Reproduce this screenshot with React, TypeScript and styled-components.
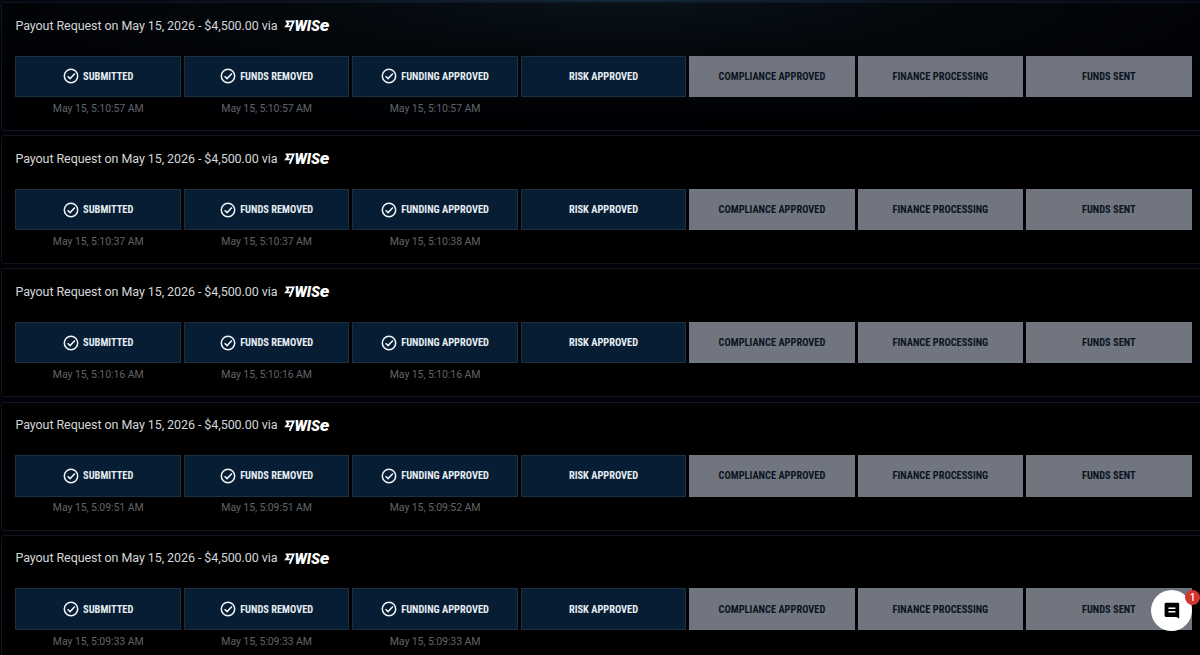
import styled, { createGlobalStyle } from 'styled-components';

type StepState = 'done' | 'current' | 'pending';

const steps: { label: string; state: StepState }[] = [
  { label: 'Submitted', state: 'done' },
  { label: 'Funds Removed', state: 'done' },
  { label: 'Funding Approved', state: 'done' },
  { label: 'Risk Approved', state: 'current' },
  { label: 'Compliance Approved', state: 'pending' },
  { label: 'Finance Processing', state: 'pending' },
  { label: 'Funds Sent', state: 'pending' },
];

const payouts = [
  { id: 1, times: ['5:10:57', '5:10:57', '5:10:57'] },
  { id: 2, times: ['5:10:37', '5:10:37', '5:10:38'] },
  { id: 3, times: ['5:10:16', '5:10:16', '5:10:16'] },
  { id: 4, times: ['5:09:51', '5:09:51', '5:09:52'] },
  { id: 5, times: ['5:09:33', '5:09:33', '5:09:33'] },
];

const WiseLogo = () => (
  <S.Logo viewBox="0 0 46 14" role="img" aria-label="Wise">
    <path
      d="M1.2 2.4H11L6.8 12.8H4.7L8.2 4.2H4.4L5.4 5.7L3.7 7.5H6.5L5.8 9.2H0.1L3 5.8Z"
      fill="#fff"
    />
    <text
      x="10.4"
      y="12.8"
      fill="#fff"
      fontFamily="Roboto, sans-serif"
      fontStyle="italic"
      fontWeight="900"
      fontSize="13.8"
      textLength="35"
      lengthAdjust="spacingAndGlyphs"
    >
      WIS<tspan fontSize="17">e</tspan>
    </text>
  </S.Logo>
);

const CheckIcon = () => (
  <S.Check viewBox="0 0 16 16">
    <circle cx="8" cy="8" r="6.7" />
    <path d="M4.6 8.2L7.1 10.6L11.9 5.5" />
  </S.Check>
);

const App = () => {
  return (
    <>
      <GlobalStyle />
      <S.Page>
        {payouts.map((payout) => (
          <S.Card key={payout.id}>
            <S.CardTitle>
              <span>Payout Request on May 15, 2026 - $4,500.00 via</span>
              <WiseLogo />
            </S.CardTitle>
            <S.Steps>
              {steps.map((step, i) => (
                <S.Step key={step.label}>
                  <S.StepBox $state={step.state}>
                    {step.state === 'done' && <CheckIcon />}
                    <S.StepLabel>{step.label}</S.StepLabel>
                  </S.StepBox>
                  {payout.times[i] && <S.Time>May 15, {payout.times[i]} AM</S.Time>}
                </S.Step>
              ))}
            </S.Steps>
          </S.Card>
        ))}
      </S.Page>
      <S.ChatButton aria-label="Open chat">
        <svg width="16" height="17" viewBox="0 0 16 17">
          <path d="M2 0.8H13.8Q15.2 0.8 15.2 2.2V16.6L12.2 15H2Q0.6 15 0.6 13.6V2.2Q0.6 0.8 2 0.8Z" fill="#000" />
          <path d="M4.4 6.3H11.4M4.4 9.7H11.4" stroke="#fff" strokeWidth="1.4" />
        </svg>
        <S.Badge>1</S.Badge>
      </S.ChatButton>
    </>
  );
};
export default App;

const GlobalStyle = createGlobalStyle`
  * {
    box-sizing: border-box;
  }

  body {
    margin: 0;
    overflow: hidden;
    background: #000;
    font-family: Roboto, 'Liberation Sans', sans-serif;
  }
`;

const S = {
  Page: styled.main`
    display: flex;
    flex-direction: column;
    gap: 4.2px;
    width: 1206px;
    height: 655px;
    padding: 2px 0 0 1px;
    overflow: hidden;
    background:
      radial-gradient(ellipse 760px 125px at 620px 0, #14273a 0%, rgba(13, 26, 38, 0.65) 45%, transparent 100%),
      #010107;
  `,
  Card: styled.section`
    flex: none;
    height: 129px;
    padding: 12px 13.4px 0;
    border: 1px solid #12141f;
    border-radius: 3px;
    background: rgba(0, 0, 0, 0.55);

    &:not(:first-child) {
      background: #000;
    }
  `,
  CardTitle: styled.div`
    display: flex;
    align-items: center;
    gap: 7px;
    height: 20px;
    margin-bottom: 20.6px;
    color: #d4d6d8;
    font-size: 12.5px;
    letter-spacing: -0.07px;
    white-space: nowrap;
  `,
  Logo: styled.svg`
    width: 46px;
    height: 14px;
    overflow: visible;
  `,
  Steps: styled.div`
    display: grid;
    grid-template-columns: repeat(7, 165.6px);
    gap: 2.85px;
  `,
  Step: styled.div`
    display: flex;
    flex-direction: column;
    align-items: center;
  `,
  StepBox: styled.div<{ $state: StepState }>`
    display: flex;
    width: 100%;
    height: 41.5px;
    justify-content: center;
    align-items: center;
    gap: 4px;
    border: 1px solid ${({ $state }) => ($state === 'pending' ? '#70757f' : '#1e2f3e')};
    background: ${({ $state }) => ($state === 'pending' ? '#70757f' : '#071d33')};
    color: ${({ $state }) => ($state === 'pending' ? '#0b1420' : '#e6edf3')};
  `,
  StepLabel: styled.span`
    font-family: 'Roboto Condensed', Roboto, sans-serif;
    font-size: 10.4px;
    font-weight: 700;
    font-stretch: 75%;
    text-transform: uppercase;
    white-space: nowrap;
  `,
  Check: styled.svg`
    width: 16px;
    height: 16px;
    fill: none;
    stroke: #f2f6f9;
    stroke-width: 1.5;
  `,
  Time: styled.span`
    margin-top: 4.8px;
    color: #626467;
    font-size: 10.5px;
    line-height: 13px;
    letter-spacing: -0.08px;
    white-space: nowrap;
  `,
  ChatButton: styled.button`
    position: fixed;
    left: 1151px;
    top: 590px;
    display: flex;
    width: 41px;
    height: 41px;
    justify-content: center;
    align-items: center;
    padding: 0;
    border: none;
    border-radius: 50%;
    background: #fff;
  `,
  Badge: styled.span`
    position: absolute;
    top: 0;
    right: -8px;
    width: 15px;
    height: 15px;
    border-radius: 50%;
    background: #d3352d;
    color: #fff;
    font-family: Roboto, sans-serif;
    font-size: 10px;
    font-weight: 500;
    line-height: 15px;
    text-align: center;
  `,
};
